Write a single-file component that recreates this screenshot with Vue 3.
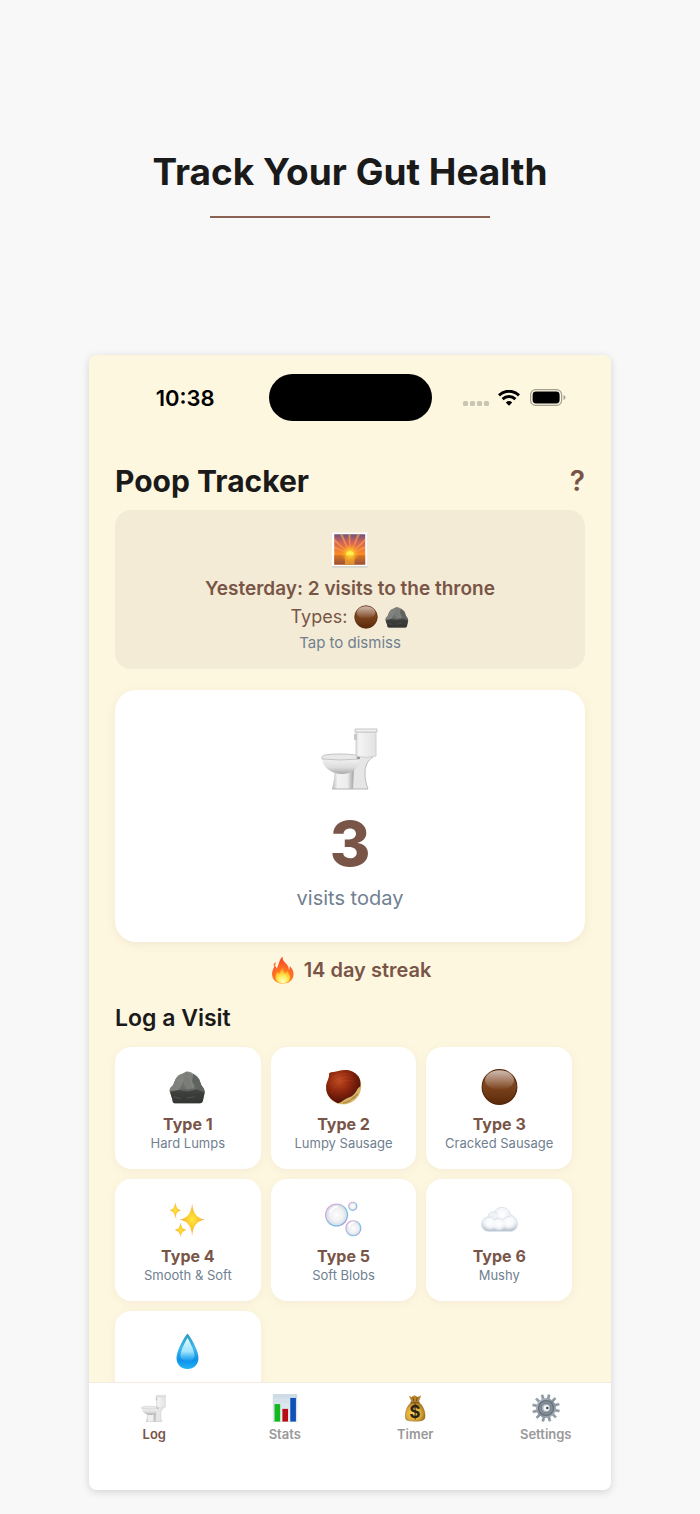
<script setup>
import { ref } from 'vue';

const yesterdayTypes = ['brown', 'rock'];
const types = [
  { icon: 'rock', title: 'Type 1', label: 'Hard Lumps' },
  { icon: 'chestnut', title: 'Type 2', label: 'Lumpy Sausage' },
  { icon: 'brown', title: 'Type 3', label: 'Cracked Sausage' },
  { icon: 'sparkles', title: 'Type 4', label: 'Smooth & Soft' },
  { icon: 'bubbles', title: 'Type 5', label: 'Soft Blobs' },
  { icon: 'cloud', title: 'Type 6', label: 'Mushy' },
  { icon: 'drop', title: 'Type 7', label: 'Liquid' },
];
const tabs = [
  { icon: 'toilet', label: 'Log' },
  { icon: 'chart', label: 'Stats' },
  { icon: 'moneybag', label: 'Timer' },
  { icon: 'gear', label: 'Settings' },
];

let visits = ref(3);
let showBanner = ref(true);
let activeTab = ref('Log');
</script>

<template>
  <div class="page">
    <svg class="sprite" aria-hidden="true">
      <defs>
        <linearGradient id="sky" x1="0" y1="0" x2="0" y2="1">
          <stop offset="0" stop-color="#6b5379" />
          <stop offset=".25" stop-color="#d2625a" />
          <stop offset=".65" stop-color="#fb8a25" />
        </linearGradient>
        <linearGradient id="sea" x1="0" y1="0" x2="0" y2="1">
          <stop offset="0" stop-color="#d9771f" />
          <stop offset="1" stop-color="#98503c" />
        </linearGradient>
        <radialGradient id="glow">
          <stop offset="0" stop-color="#fff36b" />
          <stop offset=".35" stop-color="#ffc92f" stop-opacity=".9" />
          <stop offset="1" stop-color="#ff9a20" stop-opacity="0" />
        </radialGradient>
        <linearGradient id="brownFill" x1="0" y1="0" x2="0" y2="1">
          <stop offset="0" stop-color="#8a5433" />
          <stop offset=".5" stop-color="#7b431c" />
          <stop offset="1" stop-color="#5b2a0b" />
        </linearGradient>
        <linearGradient id="shine" x1="0" y1="0" x2="0" y2="1">
          <stop offset="0" stop-color="#fff" stop-opacity=".6" />
          <stop offset="1" stop-color="#fff" stop-opacity="0" />
        </linearGradient>
        <linearGradient id="stone" x1="0" y1="0" x2="0" y2="1">
          <stop offset="0" stop-color="#8b8e89" />
          <stop offset=".55" stop-color="#686b66" />
          <stop offset=".7" stop-color="#4a4d4a" />
          <stop offset="1" stop-color="#303330" />
        </linearGradient>
        <linearGradient id="bowl" x1="0" y1="0" x2="0" y2="1">
          <stop offset="0" stop-color="#f4f4f4" />
          <stop offset=".6" stop-color="#dcdcdc" />
          <stop offset="1" stop-color="#a9a9a9" />
        </linearGradient>
        <linearGradient id="foot" x1="0" y1="0" x2="1" y2="0">
          <stop offset="0" stop-color="#b5b5b5" />
          <stop offset=".25" stop-color="#f2f2f2" />
          <stop offset=".7" stop-color="#ededed" />
          <stop offset="1" stop-color="#a0a0a0" />
        </linearGradient>
        <linearGradient id="tank" x1="0" y1="0" x2="1" y2="0">
          <stop offset="0" stop-color="#dcdcdc" />
          <stop offset=".15" stop-color="#f4f4f4" />
          <stop offset="1" stop-color="#e2e2e2" />
        </linearGradient>
        <radialGradient id="fire" cx=".5" cy=".9" r=".85">
          <stop offset="0" stop-color="#ffc928" />
          <stop offset=".45" stop-color="#ff7a1e" />
          <stop offset="1" stop-color="#f8402a" />
        </radialGradient>
        <radialGradient id="fireCore" cx=".5" cy=".9" r=".8">
          <stop offset="0" stop-color="#fffdc9" />
          <stop offset=".5" stop-color="#ffe84a" />
          <stop offset="1" stop-color="#ff9424" />
        </radialGradient>
        <radialGradient id="nut" cx=".38" cy=".32" r=".7">
          <stop offset="0" stop-color="#c04b22" />
          <stop offset=".5" stop-color="#8c260d" />
          <stop offset="1" stop-color="#4d0f08" />
        </radialGradient>
        <radialGradient id="gold">
          <stop offset="0" stop-color="#ffe83e" />
          <stop offset=".5" stop-color="#fcc82f" />
          <stop offset="1" stop-color="#f2a24b" />
        </radialGradient>
        <radialGradient id="bubble" cx=".5" cy=".5" r=".5">
          <stop offset="0" stop-color="#fdfdfd" />
          <stop offset=".6" stop-color="#f1f0f2" />
          <stop offset="1" stop-color="#cfdbe8" />
        </radialGradient>
        <linearGradient id="rim" x1="0" y1="0" x2="1" y2="1">
          <stop offset="0" stop-color="#f29fcf" />
          <stop offset=".35" stop-color="#b9b4dc" />
          <stop offset=".7" stop-color="#62c4e8" />
          <stop offset="1" stop-color="#e28fce" />
        </linearGradient>
        <linearGradient id="mist" x1="0" y1="0" x2="0" y2="1">
          <stop offset="0" stop-color="#f6f8fa" />
          <stop offset=".65" stop-color="#eaeef2" />
          <stop offset="1" stop-color="#b5c1cf" />
        </linearGradient>
        <radialGradient id="puff">
          <stop offset="0" stop-color="#fff" />
          <stop offset=".6" stop-color="#fafbfc" stop-opacity=".8" />
          <stop offset="1" stop-color="#f0f3f6" stop-opacity="0" />
        </radialGradient>
        <linearGradient id="water" x1="0" y1="0" x2="0" y2="1">
          <stop offset="0" stop-color="#2b96bd" />
          <stop offset=".4" stop-color="#3db8ee" />
          <stop offset=".75" stop-color="#0f90ea" />
          <stop offset="1" stop-color="#22b4f6" />
        </linearGradient>
        <linearGradient id="waterShine" x1="0" y1="0" x2="0" y2="1">
          <stop offset="0" stop-color="#e6fbff" />
          <stop offset=".6" stop-color="#9fe3fd" />
          <stop offset="1" stop-color="#55c3f7" stop-opacity=".2" />
        </linearGradient>
        <linearGradient id="paper" x1="0" y1="0" x2="0" y2="1">
          <stop offset="0" stop-color="#ccdae6" />
          <stop offset="1" stop-color="#f0f4f8" />
        </linearGradient>
        <radialGradient id="bag" cx=".42" cy=".6" r=".6">
          <stop offset="0" stop-color="#f8d658" />
          <stop offset=".6" stop-color="#deab38" />
          <stop offset="1" stop-color="#a5731c" />
        </radialGradient>
        <linearGradient id="steel" x1="0" y1="0" x2="1" y2="1">
          <stop offset="0" stop-color="#c2cbd3" />
          <stop offset=".5" stop-color="#86909a" />
          <stop offset="1" stop-color="#a9b2ba" />
        </linearGradient>
      </defs>

      <symbol id="sunrise" viewBox="0 0 64 64">
        <path d="M0 2h63v61H0z" fill="#c6cbc5" />
        <path d="M0 1h63v60H0z" fill="#fff" />
        <path d="M4 4h55v54H4z" fill="url(#sky)" />
        <g fill="#ffab4c" opacity=".6">
          <path d="M32 40 29 4h4z" />
          <path d="M32 40 14 4h5z" />
          <path d="M32 40 45 4h5z" />
          <path d="M32 40 4 11v6z" />
          <path d="M32 40 59 11v6z" />
          <path d="M32 40 4 25v4z" />
          <path d="M32 40 59 25v4z" />
        </g>
        <path d="M4 41h55v17H4z" fill="url(#sea)" />
        <path d="M23 41h17v17H23z" fill="#df922d" />
        <circle cx="32" cy="38" r="17" fill="url(#glow)" />
        <path d="M25 41a7 7 0 0 1 14 0z" fill="#fff04f" />
      </symbol>

      <symbol id="brown" viewBox="0 0 64 64">
        <circle cx="32" cy="32" r="30" fill="url(#brownFill)" stroke="#54270b" stroke-width="2" />
        <ellipse cx="32" cy="20" rx="25" ry="17" fill="url(#shine)" />
      </symbol>

      <symbol id="rock" viewBox="0 0 64 64">
        <path d="M31 5q7 0 11 4 7 3 10 9l4 11q6 7 6 12l-3 14q-1 5-5 5H10q-4 0-4-6L1 39q0-6 6-10l4-10q4-8 12-10z" fill="url(#stone)" />
        <path d="M31 5 23 9q-8 2-12 10L7 29q-5 4-6 10l16-2 7-14z" fill="#7f827c" />
        <path d="M31 5 24 23l6 13 12-2 4-7-5-14z" fill="#7a7d78" />
        <path d="m42 9 10 9 4 11q5 5 6 12l-14-5-8-14z" fill="#5f635f" />
        <path d="m2 41 15-4 15 3 16-4 13 6-3 14-4 4H10q-4 0-4-6z" fill="#343735" opacity=".7" />
        <path d="m25 14-7 19m16-22 5 12 2 11M14 23l6-4M8 49l12 3m10-1 15-2" fill="none" stroke="#a3a59e" stroke-width="1" opacity=".4" />
      </symbol>

      <symbol id="toilet" viewBox="0 0 64 64">
        <path d="M37 31h18c-6 4-8 9-8 16 0 6 1 11 3 16H33z" fill="#e6e6e6" />
        <path d="M55 31c-6 4-8 9-8 16 0 6 1 11 3 16" fill="none" stroke="#bdbdbd" />
        <path d="M16 42h20l-1 21H14c2-8 3-14 2-21z" fill="url(#foot)" />
        <path d="M4 32h37c1 9-6 16-17 16S4 41 4 32z" fill="url(#bowl)" />
        <path d="M4 31q0-3 18-3t19 3v2q-18 2-37 0z" fill="#e9e9e9" stroke="#c4c4c4" />
        <path d="M38 28h4v5h-3z" fill="#9a9a9a" />
        <path d="M38 6h20v24q-10 3-20 0z" fill="url(#tank)" stroke="#cfcfcf" />
        <path d="M37 3h22v3H37z" fill="#f1f1f1" stroke="#c4c4c4" />
        <path d="M36 8h3v6h-3z" fill="#c9c9c9" />
        <path d="M14 63h36" stroke="#b5b5b5" />
      </symbol>

      <symbol id="flame" viewBox="0 0 64 64">
        <path d="M31 1c-1 8 4 12 9 17 4 4 6 9 5 14 2-2 3-6 2-9 5 4 9 11 9 18 0 14-11 22-24 22C17 63 7 54 7 41c0-8 4-13 6-20 2 2 4 5 4 8C22 23 23 8 31 1z" fill="url(#fire)" />
        <path d="M15 14c-4 2-5 5-4 9 4-2 5-5 4-9z" fill="#ff702a" />
        <path d="M32 26c0 8 3 10 5 15l4-7c4 4 7 9 7 14 0 9-7 14-16 14S15 57 15 48c0-5 2-8 4-12l5 4c1-6 4-10 8-14z" fill="url(#fireCore)" />
      </symbol>

      <symbol id="chestnut" viewBox="0 0 64 64">
        <path d="M7 8c5-3 11-1 18-4 13-4 26 0 33 10 5 8 6 17 3 26-5 16-22 25-38 21C10 57 1 44 2 31 2 23 8 18 7 8z" fill="#d8b466" />
        <path d="M7 8c5-3 11-1 18-4 13-4 26 0 33 10 3 5 4 11 3 17-8 4-6 15-20 19-8 3-11 8-19 10C9 54 1 44 2 31 2 23 8 18 7 8z" fill="url(#nut)" />
        <path d="M12 18c9-9 24-13 36-5M9 30c9-13 23-19 39-13M11 41c8-15 21-23 38-20" fill="none" stroke="#e47a4f" stroke-width="1" opacity=".2" />
        <path d="m47 52 10-8m-16 12 12-7m-22 11 12-4" stroke="#80602c" stroke-width="2" opacity=".5" />
      </symbol>

      <symbol id="sparkles" viewBox="0 0 64 64">
        <g fill="url(#gold)">
          <path d="M40 5q2 25 22 28Q42 36 40 61 38 36 18 33 38 30 40 5z" />
          <path d="M11 3q1 12 10 14-9 2-10 14Q10 19 1 17 10 15 11 3z" />
          <path d="M20 38q1 11 10 13-9 2-10 13-1-11-10-13 9-2 10-13z" />
        </g>
      </symbol>

      <symbol id="bubbles" viewBox="0 0 64 64">
        <g fill="url(#bubble)" stroke="url(#rim)" stroke-width="2">
          <circle cx="20" cy="25" r="19" />
          <circle cx="49" cy="48" r="13" />
          <circle cx="48" cy="10" r="7" />
        </g>
        <path d="M9 20q4-9 12-9M41 44q3-6 9-6" fill="none" stroke="#fff" stroke-width="3" stroke-linecap="round" />
      </symbol>

      <symbol id="cloud" viewBox="0 0 64 64">
        <path d="M13 53C6 53 1 48 1 41c0-6 4-11 11-12 0-6 5-10 11-9 3-5 7-8 13-8 8 0 14 5 15 13 7 2 12 8 12 15 0 8-5 13-12 13z" fill="url(#mist)" stroke="#c3ced9" />
        <circle cx="36" cy="24" r="11" fill="url(#puff)" />
        <circle cx="16" cy="39" r="13" fill="url(#puff)" />
        <circle cx="48" cy="38" r="13" fill="url(#puff)" />
        <circle cx="31" cy="41" r="12" fill="url(#puff)" />
        <path d="M12 29q7-2 11 4m0 1q7-7 15 0m1-1q5-6 12-6M23 20q5 0 6 4" fill="none" stroke="#ccd5de" />
      </symbol>

      <symbol id="drop" viewBox="0 0 64 64">
        <path d="M32 2c2 0 19 28 19 42 0 11-8 19-19 19s-19-8-19-19C13 30 30 2 32 2z" fill="url(#water)" />
        <path d="M32 9c2 4 12 21 12 31 0 6-5 9-12 9s-12-3-12-9c0-10 10-27 12-31z" fill="url(#waterShine)" />
      </symbol>

      <symbol id="chart" viewBox="0 0 64 64">
        <path d="M5 1h54v62H5z" fill="url(#paper)" stroke="#b8c5d0" />
        <path d="M5 12h54M5 24h54M5 36h54M5 48h54" stroke="#fff" opacity=".4" />
        <path d="M8 23h13v40H8z" fill="#13b91f" />
        <path d="M26 34h13v29H26z" fill="#b80c14" />
        <path d="M44 9h13v54H44z" fill="#0e52b6" />
      </symbol>

      <symbol id="moneybag" viewBox="0 0 64 64">
        <path d="m18 4 6 3 7-4 7 4 8-4-5 14H24z" fill="#b9852c" />
        <path d="m27 8 3 9m7-10-2 10" stroke="#6f4a13" stroke-width="2" />
        <path d="M24 19h17c9 8 14 20 14 31 0 9-4 12-23 12S10 60 10 51c0-13 5-25 14-32z" fill="url(#bag)" stroke="#87601c" />
        <path d="M22 17h20v4H22z" fill="#8a5c1b" />
        <text x="32" y="54" class="dollar" text-anchor="middle">$</text>
      </symbol>

      <symbol id="gear" viewBox="0 0 64 64">
        <g fill="url(#steel)">
          <path v-for="n in 12" :key="n" d="m30 12 0-11h5l0 11z" :transform="`rotate(${n * 30 + 12} 32 32)`" stroke="#79838c" />
        </g>
        <circle cx="32" cy="32" r="23" fill="url(#steel)" />
        <circle cx="32" cy="32" r="17" fill="#87919a" stroke="#65707a" stroke-width="3" />
        <circle cx="32" cy="32" r="11" fill="#a7b0b8" stroke="#6c767f" stroke-width="2" />
        <circle cx="33" cy="32" r="7" fill="#f4f6f7" />
        <circle cx="35" cy="32" r="3" fill="#434b52" />
      </symbol>
    </svg>

    <header class="hero">
      <h1>Track Your Gut Health</h1>
      <div class="rule"></div>
    </header>

    <div class="phone">
      <div class="status-bar">
        <span class="time">10:38</span>
        <span class="island"></span>
        <span class="indicators">
          <svg class="signal" viewBox="0 0 26 5" aria-hidden="true">
            <g fill="#cbc5b3">
              <rect v-for="n in 4" :key="n" :x="(n - 1) * 7" y="0" width="5" height="5" rx="1.5" />
            </g>
          </svg>
          <svg class="wifi" viewBox="0 0 22 16" aria-hidden="true">
            <path d="M1 5.3a14.4 14.4 0 0 1 20 0M4.6 9.1a9.2 9.2 0 0 1 12.8 0" fill="none" stroke="#000" stroke-width="3" />
            <path d="M7.8 12.4a4.8 4.8 0 0 1 6.4 0L11 15.8z" />
          </svg>
          <svg class="battery" viewBox="0 0 36 17" aria-hidden="true">
            <rect x=".6" y=".6" width="31" height="15.8" rx="5" fill="none" stroke="#a39f91" stroke-width="1.2" />
            <rect x="2.6" y="2.6" width="27" height="11.8" rx="3.4" />
            <path d="M33.5 6q2 .6 2 2.5t-2 2.5z" fill="#a39f91" />
          </svg>
        </span>
      </div>

      <main class="content">
        <div class="title-row">
          <h2>Poop Tracker</h2>
          <button class="help" aria-label="Help">?</button>
        </div>

        <button v-if="showBanner"
                class="banner"
                @click="showBanner = false">
          <svg class="banner-icon" aria-hidden="true"><use href="#sunrise" /></svg>
          <span class="banner-title">Yesterday: 2 visits to the throne</span>
          <span class="banner-types">Types:
            <svg v-for="t in yesterdayTypes" :key="t" aria-hidden="true"><use :href="'#' + t" /></svg>
          </span>
          <span class="banner-hint">Tap to dismiss</span>
        </button>

        <section class="today">
          <svg class="today-icon" aria-hidden="true"><use href="#toilet" /></svg>
          <div class="count">{{ visits }}</div>
          <div class="count-label">visits today</div>
        </section>

        <div class="streak">
          <svg aria-hidden="true"><use href="#flame" /></svg>
          <span>14 day streak</span>
        </div>

        <h3>Log a Visit</h3>
        <div class="types">
          <button v-for="type in types"
                  :key="type.title"
                  class="type"
                  @click="visits++">
            <svg aria-hidden="true"><use :href="'#' + type.icon" /></svg>
            <span class="type-title">{{ type.title }}</span>
            <span class="type-label">{{ type.label }}</span>
          </button>
        </div>
      </main>

      <nav class="tabs">
        <a v-for="tab in tabs"
           :key="tab.label"
           href="#"
           :class="activeTab == tab.label ? 'active' : ''"
           @click.prevent="activeTab = tab.label">
          <svg aria-hidden="true"><use :href="'#' + tab.icon" /></svg>
          <span>{{ tab.label }}</span>
        </a>
      </nav>
    </div>
  </div>
</template>

<style>
body {
  background: #f8f8f8;
}
</style>

<style scoped>
.page {
  --brown: #795548;
  --slate: #708090;
  box-sizing: border-box;
  height: 100vh;
  padding: 148px 89px 24px;
  display: flex;
  flex-direction: column;
  font-family: Inter, "Liberation Sans", sans-serif;
  color: #1a1a1a;
}

.sprite {
  position: absolute;
  width: 0;
  height: 0;
}

.dollar {
  font: bold 38px Inter, sans-serif;
  fill: #2b2415;
}

h1,
h2,
h3 {
  margin: 0;
}

button {
  border: none;
  padding: 0;
  font-family: inherit;
  cursor: pointer;
}

.hero {
  display: flex;
  flex-direction: column;
  align-items: center;
  margin-bottom: 137px;
}

h1 {
  font-size: 37px;
  font-weight: 700;
  line-height: 48px;
  white-space: nowrap;
}

.rule {
  width: 280px;
  height: 2px;
  margin-top: 20px;
  background: #8b6355;
}

.phone {
  flex: 1;
  min-height: 0;
  display: flex;
  flex-direction: column;
  overflow: hidden;
  background: #fef7e0;
  border-radius: 8px;
  box-shadow: 0 2px 8px rgba(0, 0, 0, 0.15);
}

.status-bar {
  display: grid;
  grid-template-columns: 1fr 163px 1fr;
  align-items: center;
  justify-items: center;
  padding: 19px 13px 40px;
}

.time {
  font-size: 22px;
  font-weight: 600;
  color: #000;
}

.island {
  width: 163px;
  height: 47px;
  border-radius: 24px;
  background: #000;
}

.indicators {
  display: flex;
  align-items: center;
}

.signal {
  width: 26px;
  height: 5px;
  margin: 12px 9px 0 0;
}

.wifi {
  width: 22px;
  height: 16px;
  margin-right: 10px;
}

.battery {
  width: 36px;
  height: 17px;
}

.content {
  flex: 1;
  min-height: 0;
  overflow-y: auto;
  scrollbar-width: none;
  padding: 0 26px;
}

.title-row {
  display: flex;
  justify-content: space-between;
  align-items: center;
  height: 40px;
  margin-bottom: 9px;
}

h2 {
  font-size: 30px;
  font-weight: 700;
}

.help {
  background: none;
  font-size: 28px;
  font-weight: 600;
  color: var(--brown);
}

.banner {
  width: 100%;
  display: flex;
  flex-direction: column;
  align-items: center;
  gap: 1px;
  padding: 22px 16px 16px;
  border-radius: 16px;
  background: #f3ebd5;
  color: var(--brown);
}

.banner-icon {
  width: 36px;
  height: 36px;
  margin-bottom: 6px;
}

.banner-title {
  font-size: 19px;
  font-weight: 600;
  line-height: 27px;
}

.banner-types {
  display: flex;
  align-items: center;
  gap: 7px;
  font-size: 18px;
  line-height: 28px;
}

.banner-types svg {
  width: 24px;
  height: 24px;
}

.banner-hint {
  font-size: 15px;
  line-height: 21px;
  color: var(--slate);
}

.today {
  display: flex;
  flex-direction: column;
  align-items: center;
  margin-top: 21px;
  padding: 36px 16px 30px;
  border-radius: 21px;
  background: #fff;
  box-shadow: 0 2px 10px rgba(121, 85, 72, 0.1);
}

.today-icon {
  width: 64px;
  height: 64px;
}

.count {
  margin: 16px 0 3px;
  font-size: 62px;
  font-weight: 800;
  line-height: 76px;
  color: var(--brown);
}

.count-label {
  font-size: 20px;
  line-height: 27px;
  color: var(--slate);
}

.streak {
  display: flex;
  justify-content: center;
  align-items: center;
  gap: 7px;
  margin: 14px 0 19px;
  font-size: 20px;
  font-weight: 600;
  line-height: 28px;
  color: var(--brown);
}

.streak svg {
  width: 28px;
  height: 28px;
}

h3 {
  font-size: 23px;
  font-weight: 600;
  line-height: 30px;
}

.types {
  display: grid;
  grid-template-columns: repeat(3, 31%);
  gap: 10px;
  margin: 14px 0;
}

.type {
  display: flex;
  flex-direction: column;
  align-items: center;
  padding: 20px 4px 17px;
  border-radius: 16px;
  background: #fff;
  box-shadow: 0 2px 8px rgba(121, 85, 72, 0.08);
}

.type svg {
  width: 37px;
  height: 40px;
  margin-bottom: 7px;
}

.type-title {
  font-size: 16px;
  font-weight: 700;
  line-height: 20px;
  color: var(--brown);
}

.type-label {
  font-size: 13px;
  line-height: 18px;
  color: var(--slate);
}

.tabs {
  display: grid;
  grid-template-columns: repeat(4, 1fr);
  padding: 11px 0 47px;
  background: #fff;
  box-shadow: 0 -1px 0 #f1ecdf;
}

.tabs a {
  display: flex;
  flex-direction: column;
  align-items: center;
  gap: 3px;
  font-size: 13px;
  font-weight: 600;
  line-height: 18px;
  color: #999;
  text-decoration: none;
}

.tabs a.active {
  color: var(--brown);
}

.tabs svg {
  width: 28px;
  height: 28px;
}
</style>
